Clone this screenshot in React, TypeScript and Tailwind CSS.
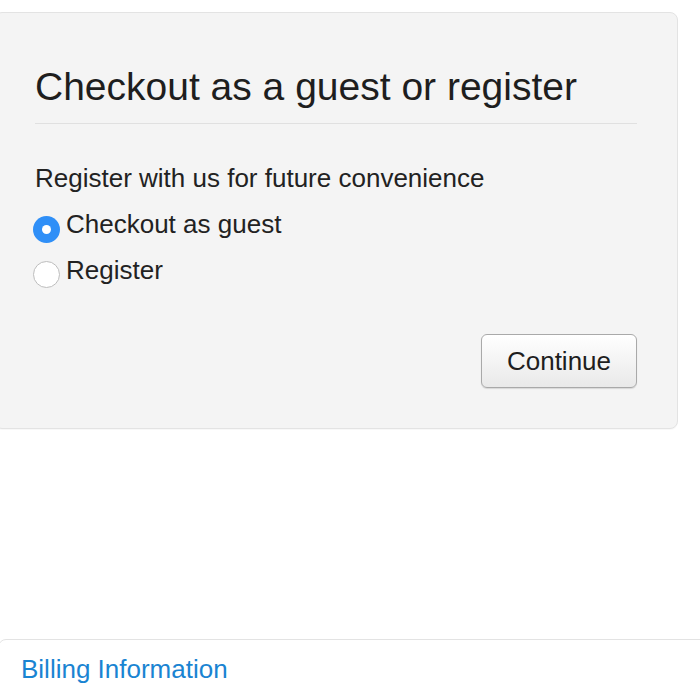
export default function App() {
  return (
    <div className="w-[700px] h-[700px] overflow-hidden bg-white font-['Liberation_Sans',Arial,sans-serif] text-[#222]">
      <div className="ml-[-6px] mt-3 w-[684px] h-[417px] rounded-lg border border-[#e3e3e3] bg-[#f4f4f4] pl-[40px] pr-[40px] pt-[50px] shadow-[0_1px_1px_rgba(0,0,0,0.03)]">
        <h1 className="text-[39px] leading-[48px] text-[#1e1e1e] pb-[12px] border-b border-[#e0e0e0]">
          Checkout as a guest or register
        </h1>
        <p className="mt-[38px] text-[26px] leading-[32px]">Register with us for future convenience</p>
        <div className="mt-[14px] flex items-start gap-[6px] ml-[-2px]">
          <span className="mt-[8px] w-[27px] h-[27px] rounded-full bg-[#2f8ff7] flex items-center justify-center">
            <span className="w-[9px] h-[9px] rounded-full bg-white" />
          </span>
          <span className="text-[26px] leading-[32px]">Checkout as guest</span>
        </div>
        <div className="mt-[11px] flex items-start gap-[6px] ml-[-2px]">
          <span className="mt-[7px] w-[27px] h-[27px] rounded-full bg-white border border-[#bdbdbd]" />
          <span className="text-[26px] leading-[32px]">Register</span>
        </div>
        <div className="mt-[46px] flex justify-end">
          <button className="w-[156px] h-[54px] rounded-[6px] border border-[#a9a9a9] bg-gradient-to-b from-white to-[#e9e9e9] text-[26px] text-[#1e1e1e] shadow-[0_1px_1px_rgba(0,0,0,0.12)]">
            Continue
          </button>
        </div>
      </div>
      <div className="mt-[210px] ml-[-2px] w-[720px] h-[80px] rounded-tl-lg border border-[#e3e3e3] bg-white pl-[22px] pt-[13px]">
        <span className="text-[26px] leading-[32px] text-[#1a84d2]">Billing Information</span>
      </div>
    </div>
  );
}
